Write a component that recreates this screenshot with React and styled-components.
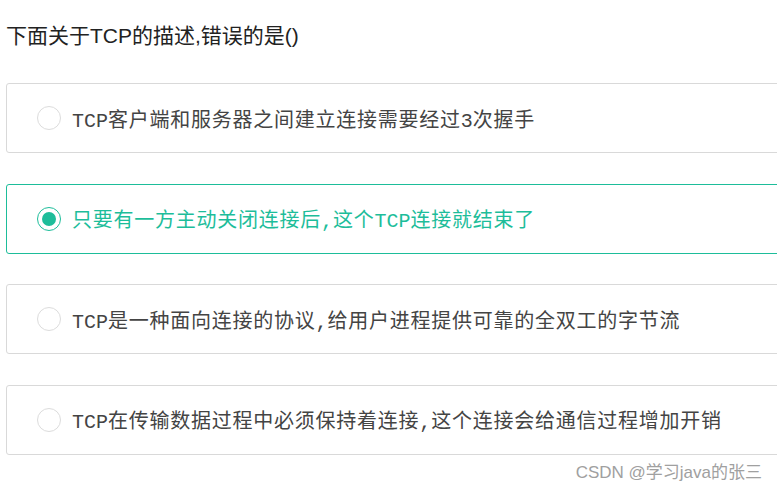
import React, { useState } from 'react';
import styled, { createGlobalStyle } from 'styled-components';

const GlobalStyle = createGlobalStyle`
  html, body {
    margin: 0;
    padding: 0;
    background: #fff;
    overflow: hidden;
  }
`;

const Page = styled.div`
  position: relative;
  width: 777px;
  height: 493px;
  padding: 22px 0 0 6px;
  box-sizing: border-box;
  overflow: hidden;
`;

const Question = styled.div`
  font-family: "Liberation Sans", "Noto Sans CJK SC", sans-serif;
  font-size: 21px;
  line-height: 28px;
  color: #222;
  margin-bottom: 33px;
`;

const OptionList = styled.div`
  display: flex;
  flex-direction: column;
  gap: 30.5px;
  width: 820px;
`;

const Option = styled.label`
  display: flex;
  align-items: center;
  height: 70px;
  box-sizing: border-box;
  padding-left: 30px;
  border: 1px solid ${(p) => (p.$active ? '#1dbd9a' : '#d9d9d9')};
  border-radius: 3px;
  cursor: pointer;
`;

const Radio = styled.span`
  width: 24px;
  height: 24px;
  box-sizing: border-box;
  border-radius: 50%;
  border: 1px solid ${(p) => (p.$active ? '#1dbd9a' : '#dcdcdc')};
  display: flex;
  align-items: center;
  justify-content: center;
  margin-right: 11px;
  flex-shrink: 0;

  &::after {
    content: '';
    width: 14px;
    height: 14px;
    border-radius: 50%;
    background: #1dbd9a;
    display: ${(p) => (p.$active ? 'block' : 'none')};
  }
`;

const OptionText = styled.span`
  font-family: "Noto Sans CJK SC", sans-serif;
  font-size: 20px;
  letter-spacing: 0.75px;
  color: ${(p) => (p.$active ? '#1dbd9a' : '#444')};
  white-space: nowrap;
`;

const Latin = styled.span`
  font-family: "Courier New", "Nimbus Mono PS", FreeMono, "Liberation Mono", monospace;
  letter-spacing: 0;
`;

const Watermark = styled.div`
  position: absolute;
  right: 15px;
  bottom: 10px;
  font-family: "Liberation Sans", "Noto Sans CJK SC", sans-serif;
  font-size: 17px;
  color: #a0a0a0;
`;

const options = [
  'TCP客户端和服务器之间建立连接需要经过3次握手',
  '只要有一方主动关闭连接后,这个TCP连接就结束了',
  'TCP是一种面向连接的协议,给用户进程提供可靠的全双工的字节流',
  'TCP在传输数据过程中必须保持着连接,这个连接会给通信过程增加开销',
];

// latin runs are set in a monospace face, the rest in the CJK face
const renderText = (text) =>
  text.split(/([A-Za-z0-9,]+)/).map((part, i) =>
    /^[A-Za-z0-9,]+$/.test(part) ? <Latin key={i}>{part}</Latin> : part
  );

export default function App() {
  const [selected, setSelected] = useState(1);

  return (
    <Page>
      <GlobalStyle />
      <Question>下面关于TCP的描述,错误的是()</Question>
      <OptionList>
        {options.map((text, i) => (
          <Option key={i} $active={selected === i} onClick={() => setSelected(i)}>
            <Radio $active={selected === i} />
            <OptionText $active={selected === i}>{renderText(text)}</OptionText>
          </Option>
        ))}
      </OptionList>
      <Watermark>CSDN @学习java的张三</Watermark>
    </Page>
  );
}
